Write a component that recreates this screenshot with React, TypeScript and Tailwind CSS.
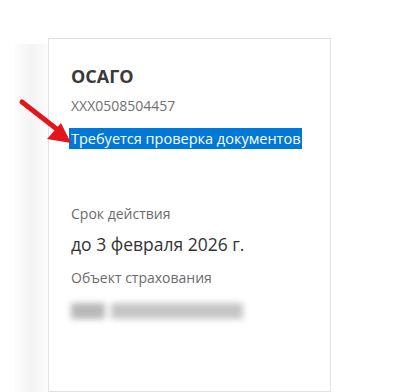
import type { ReactNode } from "react";

// Карточка полиса ОСАГО с выделенным статусом и стрелкой-указателем
function Field({ label, children }: { label: string; children: ReactNode }) {
  return (
    <div className="flex flex-col">
      <span className="text-[14px] leading-[20px] text-[#6b6b6b]">{label}</span>
      {children}
    </div>
  );
}

function Arrow() {
  return (
    <svg
      className="absolute left-[18px] top-[98px]"
      width="58"
      height="50"
      viewBox="0 0 58 50"
      aria-hidden="true"
    >
      <line x1="4" y1="4" x2="40" y2="32" stroke="#e3171b" strokeWidth="5" strokeLinecap="round" />
      <polygon points="53,45 29,41 43,25" fill="#e3171b" />
    </svg>
  );
}

export default function App() {
  return (
    <main
      className="relative flex h-[392px] w-[414px] overflow-hidden bg-white text-[#333]"
      style={{ fontFamily: '"Open Sans", "Noto Sans", sans-serif' }}
    >
      {/* Боковая полоска-тень слева от карточки */}
      <div className="ml-[15px] mt-[44px] w-[33px] bg-gradient-to-r from-[#fcfcfc] via-[#f4f4f4] to-[#fbfbfb]" />

      {/* Карточка */}
      <section className="mt-[38px] flex w-[283px] flex-col border border-[#e2e2e2] bg-white pl-[22px] pt-[24px]">
        <h2 className="text-[18px] font-bold leading-[26px] text-[#3a3a3a]">ОСАГО</h2>
        <span className="mt-[8px] text-[14px] leading-[18px] text-[#707070]">XXX0508504457</span>
        <span className="-ml-[2px] mt-[13px] w-fit bg-[#0078d7] px-[2px] text-[14.5px] leading-[21px] text-white">
          Требуется проверка документов
        </span>

        <div className="mt-[55px] flex flex-col gap-[11px]">
          <Field label="Срок действия">
            <span className="mt-[7px] text-[17.5px] leading-[26px] text-[#333]">до 3 февраля 2026 г.</span>
          </Field>
          <Field label="Объект страхования">
            <div className="mt-[15px] flex gap-[6px] blur-[3px]">
              <span className="h-[16px] w-[34px] bg-[#b8b8b8]" />
              <span className="h-[16px] w-[132px] bg-[#c6c6c6]" />
            </div>
          </Field>
        </div>
      </section>

      <Arrow />
    </main>
  );
}
